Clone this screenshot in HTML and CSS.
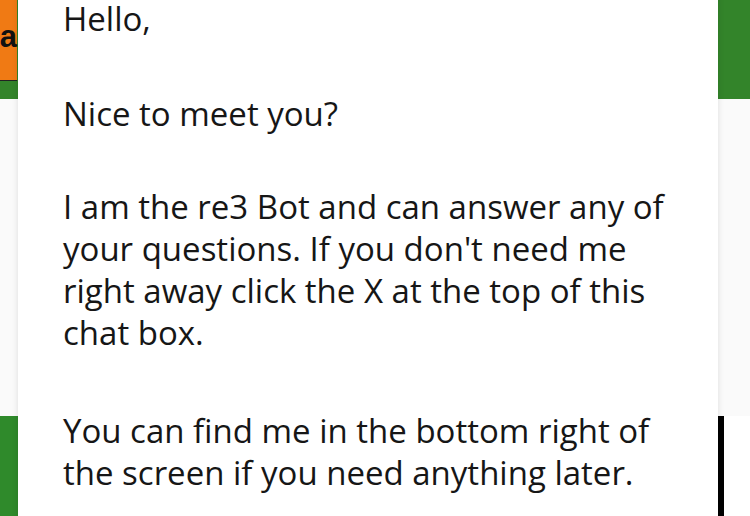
FILE: index.html
```html
<!DOCTYPE html>
<html>
<head>
<meta charset="utf-8">
<link rel="stylesheet" href="styles.css">
</head>
<body>
<div class="page">
  <header class="topbar">
    <div class="brand-btn"><span class="brand-text">a</span></div>
  </header>
  <main class="middle"></main>
  <footer class="bottom">
    <div class="green-btn"></div>
    <div class="spacer"></div>
    <div class="dark-btn"></div>
  </footer>
</div>
<div class="chat-modal">
  <p class="msg">Hello,</p>
  <p class="msg">Nice to meet you?</p>
  <p class="msg">I am the re3 Bot and can answer any of<br>your questions. If you don't need me<br>right away click the X at the top of this<br>chat box.</p>
  <p class="msg">You can find me in the bottom right of<br>the screen if you need anything later.</p>
</div>
</body>
</html>
```
FILE: styles.css
```css
html, body {
  margin: 0;
  padding: 0;
  width: 750px;
  height: 516px;
  overflow: hidden;
  background: #fafafa;
}
.page {
  display: flex;
  flex-direction: column;
  height: 516px;
}
.topbar {
  height: 99px;
  background: #33842a;
  flex: none;
}
.brand-btn {
  width: 300px;
  height: 80px;
  background: #f07a14;
  border-bottom: 1px solid #222;
  display: flex;
  align-items: center;
  justify-content: flex-end;
  margin-left: -283px;
}
.brand-text {
  font-family: "Liberation Sans", Arial, sans-serif;
  font-weight: bold;
  font-size: 31px;
  color: #111;
  padding: 0 0 8px 0;
  line-height: 1;
}
.middle {
  flex: 1;
  background: #fafafa;
}
.bottom {
  height: 100px;
  flex: none;
  display: flex;
  background: #ffffff;
}
.green-btn {
  width: 400px;
  background: #2f8a2b;
}
.spacer {
  flex: 1;
}
.dark-btn {
  width: 120px;
  margin-right: 26px;
  background: #000;
}
.chat-modal {
  position: absolute;
  left: 18px;
  top: -40px;
  width: 655px;
  height: 600px;
  padding: 38px 0 0 45px;
  background: #fff;
  box-shadow: 0 0 6px rgba(0,0,0,0.12);
  font-family: "Open Sans", "Noto Sans", sans-serif;
  font-size: 33px;
  line-height: 42px;
  color: #161616;
}
.msg {
  margin: 0 0 56px;
  white-space: nowrap;
}
.msg:nth-child(1) {
  margin-bottom: 53px;
}
.msg:nth-child(2) {
  margin-bottom: 51px;
}
```
